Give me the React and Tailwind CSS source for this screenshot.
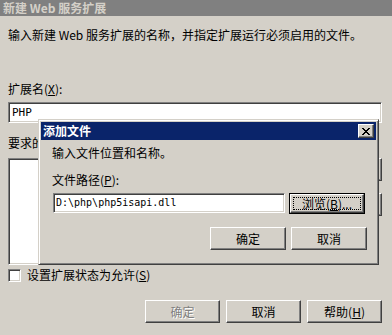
import React from 'react';

const raised =
  'border border-t-white border-l-white border-r-[#404040] border-b-[#404040] shadow-[inset_-1px_-1px_0_#808080] bg-[#d4d0c8]';
const sunken =
  'border border-t-[#808080] border-l-[#808080] border-r-white border-b-white shadow-[inset_1px_1px_0_#404040,inset_-1px_-1px_0_#d4d0c8]';

function Button({ children, className = '', disabled }) {
  return (
    <div
      className={`${raised} flex items-center justify-center h-[23px] w-[75px] whitespace-nowrap ${
        disabled ? 'text-[#808080] [text-shadow:1px_1px_0_#fff]' : ''
      } ${className}`}
    >
      {children}
    </div>
  );
}

function CloseIcon() {
  return (
    <svg width="8" height="7" viewBox="0 0 8 7" shapeRendering="crispEdges">
      <path
        d="M0 0h2v1h1v1h2v-1h1v-1h2v1h-1v1h-1v1h-1v1h1v1h1v1h1v1h-2v-1h-1v-1h-2v1h-1v1h-2v-1h1v-1h1v-1h1v-1h-1v-1h-1v-1h-1z"
        fill="#000"
      />
    </svg>
  );
}

export default function App() {
  return (
    <div className="relative w-[392px] h-[335px] overflow-hidden bg-[#d4d0c8] text-[12px] leading-[14px] text-black font-['Noto_Sans_CJK_SC',sans-serif]">
      {/* inactive parent window caption */}
      <div className="h-4 bg-[#808080] pl-[3px] flex items-center font-bold text-[#d4d0c8]">
        新建 Web 服务扩展
      </div>

      <div className="pl-2 pr-[10px]">
        <p className="mt-3">输入新建 Web 服务扩展的名称，并指定扩展运行必须启用的文件。</p>

        <p className="mt-[40px]">
          扩展名(<u>X</u>):
        </p>
        <div className={`${sunken} mt-[6px] h-[21px] bg-white flex items-center pl-[3px] font-['DejaVu_Sans_Mono',monospace] text-[11px]`}>
          PHP
        </div>

        <p className="mt-[13px]">要求的文件(R):</p>
        <div className="mt-2 flex items-start">
          <div className={`${sunken} bg-white w-[287px] h-[107px]`} />
          <div className="ml-auto flex flex-col gap-3">
            <Button className="w-[76px]">添加(D)...</Button>
            <Button className="w-[76px]">删除(M)</Button>
          </div>
        </div>

        <div className="mt-[3px] h-[14px] flex items-center">
          <div className={`${sunken} bg-white w-[13px] h-[13px]`} />
          <span className="ml-[6px]">
            设置扩展状态为允许(<u>S</u>)
          </span>
        </div>

        <div className="mt-[18px] flex justify-end gap-[6px]">
          <Button disabled>确定</Button>
          <Button>取消</Button>
          <Button>
            帮助(<u>H</u>)
          </Button>
        </div>
      </div>

      {/* modal dialog */}
      <div className="absolute left-[38px] top-[119px] w-[341px] h-[146px] p-[2px] bg-[#d4d0c8] border border-t-[#d4d0c8] border-l-[#d4d0c8] border-r-[#404040] border-b-[#404040] shadow-[inset_1px_1px_0_#fff,inset_-1px_-1px_0_#808080]">
        <div className="h-[18px] bg-[#0a246a] flex items-center pl-[2px] pr-[2px]">
          <span className="font-bold text-white">添加文件</span>
          <div className={`${raised} ml-auto w-4 h-[14px] flex items-center justify-center`}>
            <CloseIcon />
          </div>
        </div>

        <div className="pl-[11px] pr-[9px]">
          <p className="mt-[6px]">输入文件位置和名称。</p>
          <p className="mt-[13px]">
            文件路径(<u>P</u>):
          </p>
          <div className="mt-[6px] flex items-start">
            <div className={`${sunken} ml-px bg-white w-[232px] h-[20px] flex items-center pl-[2px] font-['DejaVu_Sans_Mono',monospace] text-[10px]`}>
              {'D:\\php\\php5isapi.dll'}
            </div>
            <div className="ml-1 w-[76px] h-[21px] border border-black">
              <div className={`${raised} w-full h-full flex items-center justify-center p-[2px]`}>
                <div className="w-full h-full border border-dotted border-black flex items-center justify-center whitespace-nowrap">
                  浏览(<u>B</u>)...
                </div>
              </div>
            </div>
          </div>
          <div className="mt-[13px] flex justify-end gap-[5px]">
            <Button className="w-[76px]">确定</Button>
            <Button className="w-[76px]">取消</Button>
          </div>
        </div>
      </div>
    </div>
  );
}
